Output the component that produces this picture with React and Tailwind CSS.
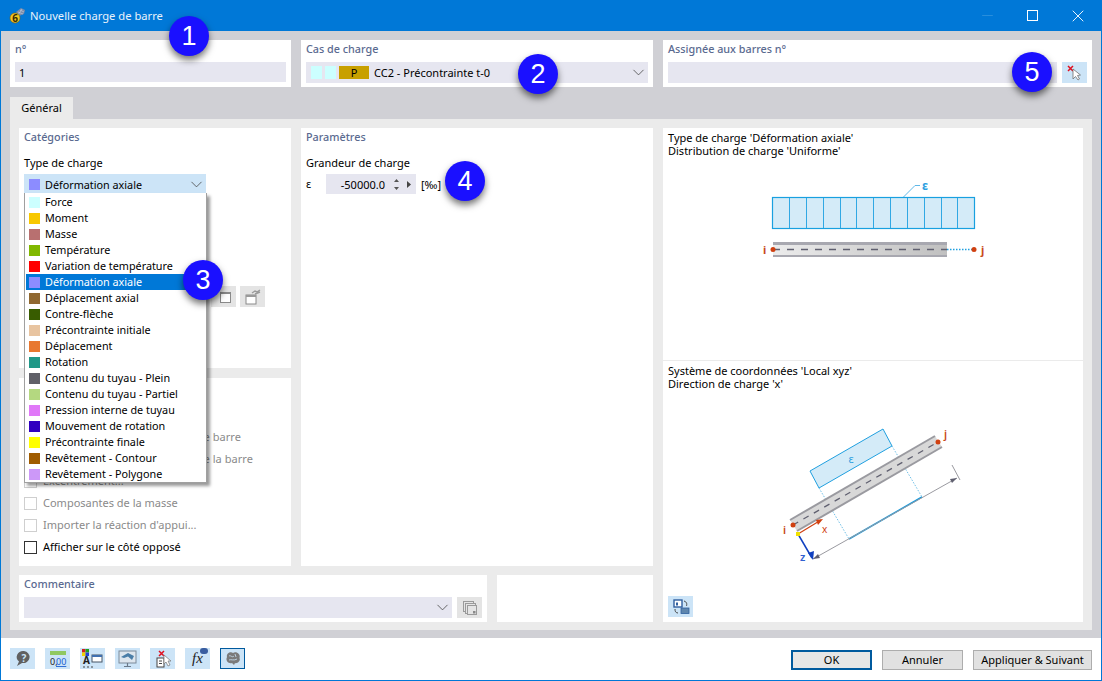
import { ChevronDown, Minus, X } from 'lucide-react';

const loadTypes = [
  ['Force', 'bg-[#ccffff]'],
  ['Moment', 'bg-[#f8c800]'],
  ['Masse', 'bg-[#b87070]'],
  ['Température', 'bg-[#80b800]'],
  ['Variation de température', 'bg-[#ff0000]'],
  ['Déformation axiale', 'bg-[#8c8cff]'],
  ['Déplacement axial', 'bg-[#906830]'],
  ['Contre-flèche', 'bg-[#385c00]'],
  ['Précontrainte initiale', 'bg-[#e8c4a0]'],
  ['Déplacement', 'bg-[#e87830]'],
  ['Rotation', 'bg-[#209888]'],
  ['Contenu du tuyau - Plein', 'bg-[#606068]'],
  ['Contenu du tuyau - Partiel', 'bg-[#b4d880]'],
  ['Pression interne de tuyau', 'bg-[#e078f8]'],
  ['Mouvement de rotation', 'bg-[#3000c0]'],
  ['Précontrainte finale', 'bg-[#ffff00]'],
  ['Revêtement - Contour', 'bg-[#a05c00]'],
  ['Revêtement - Polygone', 'bg-[#cc98f8]'],
];

const GroupTitle = ({ children }) => (
  <div className="h-[18px] text-[10.8px] leading-[16px] font-medium text-[#5a6a90]">{children}</div>
);

const Check = ({ label, enabled, wide }) => (
  <div className="flex h-[22px] items-center gap-[6px]">
    <span className={`h-[13px] w-[13px] border ${enabled ? 'border-[#333333]' : 'border-[#cfcfcf]'}`} />
    <span className={`${enabled ? 'text-black' : 'text-[#8a8a8a]'} ${wide ? 'tracking-[0.05px]' : ''}`}>{label}</span>
  </div>
);

const Badge = ({ n, className }) => (
  <div
    className={`absolute flex h-10 w-10 items-center justify-center rounded-full bg-[#1a10ff] text-[27px] text-white shadow-[0_4px_7px_rgba(0,0,0,0.55)] [font-family:'Liberation_Sans',sans-serif] ${className}`}
  >
    {n}
  </div>
);

const ToolButton = ({ children, active }) => (
  <div
    className={`flex h-[21px] w-[25px] items-center justify-center bg-[#cce4f7] ${active ? 'border border-[#005a9e]' : ''}`}
  >
    {children}
  </div>
);

const BeamDiagram = () => (
  <svg width="240" height="77" viewBox="0 0 240 77" className="block">
    <line x1="145" y1="38.5" x2="163" y2="20.5" stroke="#60b8e8" />
    <line x1="163" y1="20.5" x2="168" y2="20.5" stroke="#60b8e8" />
    <text x="170" y="25" fontSize="12" fontWeight="700" fill="#30a0e0" fontFamily="Noto Sans, sans-serif">ε</text>
    <rect x="20.5" y="32.5" width="202" height="31" fill="#d4ebf8" stroke="#18a0e0" strokeWidth="1.2" />
    {[37, 54, 71, 88, 104, 121, 138, 155, 172, 189, 205].map((x) => (
      <line key={x} x1={x + 0.5} y1="33" x2={x + 0.5} y2="63" stroke="#30a8e4" />
    ))}
  </svg>
);

const FlatBeam = () => (
  <svg width="240" height="22" viewBox="0 0 240 22" className="block">
    <defs>
      <linearGradient id="flatFill" x1="0" y1="0" x2="1" y2="0">
        <stop offset="0" stopColor="#ececec" />
        <stop offset="1" stopColor="#c0c0c0" />
      </linearGradient>
    </defs>
    <rect x="21" y="0" width="174" height="15" fill="url(#flatFill)" />
    <rect x="21" y="0" width="174" height="3" fill="#a8a8b0" />
    <rect x="21" y="13" width="174" height="2" fill="#a8a8b0" />
    <line x1="21" y1="7.5" x2="195" y2="7.5" stroke="#606070" strokeWidth="1.3" strokeDasharray="7 7" />
    <line x1="195" y1="7.5" x2="223" y2="7.5" stroke="#20a0e0" strokeWidth="1.5" strokeDasharray="1.5 1.5" />
    <circle cx="21" cy="7.5" r="2.5" fill="#d04010" />
    <circle cx="222" cy="7.5" r="2.5" fill="#d04010" />
    <text x="11" y="12" fontSize="11" fontWeight="700" fill="#c84a20" fontFamily="Noto Sans, sans-serif">i</text>
    <text x="229" y="12" fontSize="11" fontWeight="700" fill="#c84a20" fontFamily="Noto Sans, sans-serif">j</text>
  </svg>
);

const SkewDiagram = () => (
  <svg width="200" height="150" viewBox="780 420 200 150" className="block">
    <polygon points="810,471 883,429 892,446 819,488" fill="#d4ebf8" stroke="#20a0e0" />
    <text x="851" y="463" fontSize="11" fill="#30a0e0" fontFamily="Noto Sans, sans-serif" textAnchor="middle">ε</text>
    <line x1="819" y1="488" x2="849" y2="539" stroke="#70c0e8" strokeDasharray="1.5 1.5" />
    <line x1="892" y1="446" x2="922" y2="497" stroke="#70c0e8" strokeDasharray="1.5 1.5" />
    <polygon points="790,520 935,436 942,447 797,531" fill="#d8d8d8" />
    <line x1="790" y1="520" x2="935" y2="436" stroke="#9a9aa0" strokeWidth="2" />
    <line x1="797" y1="531" x2="942" y2="447" stroke="#9a9aa0" strokeWidth="2" />
    <line x1="793" y1="525" x2="938" y2="442" stroke="#606070" strokeWidth="1.3" strokeDasharray="6 6" />
    <line x1="849" y1="539" x2="922" y2="497" stroke="#109ae0" strokeWidth="1.6" />
    <line x1="813" y1="559" x2="957" y2="478" stroke="#9a9aa0" />
    <line x1="952" y1="465" x2="960" y2="480" stroke="#9a9aa0" />
    <polygon points="957,478 950,479 952,483" fill="#606070" />
    <polygon points="813,559 820,558 818,554" fill="#606070" />
    <circle cx="793" cy="525" r="2.5" fill="#d04010" />
    <circle cx="938" cy="442" r="2.5" fill="#d04010" />
    <line x1="798" y1="534" x2="821" y2="520" stroke="#d04010" strokeWidth="1.2" />
    <polygon points="823,519 816,520 818,525" fill="#d04010" />
    <line x1="798" y1="534" x2="812" y2="558" stroke="#1040c0" strokeWidth="1.5" />
    <polygon points="813,560 808,553 814,551" fill="#1040c0" />
    <rect x="796" y="532" width="4" height="4" fill="#f0e000" />
    <text x="783" y="534" fontSize="11" fontWeight="600" fill="#c84a20" fontFamily="Noto Sans, sans-serif">i</text>
    <text x="944" y="438" fontSize="11" fontWeight="600" fill="#c84a20" fontFamily="Noto Sans, sans-serif">j</text>
    <text x="822" y="533" fontSize="10" fill="#d04010" fontFamily="Noto Sans, sans-serif">x</text>
    <text x="800" y="561" fontSize="11" fontWeight="600" fill="#3060d0" fontFamily="Noto Sans, sans-serif">z</text>
  </svg>
);

const App = () => {
  return (
    <div className="relative flex h-[681px] w-[1102px] flex-col overflow-hidden border-x border-b border-[#0078d7] bg-white text-[11px] leading-4 text-black [font-family:'Noto_Sans',sans-serif]">
      <div className="flex h-[31px] shrink-0 items-center bg-[#0078d7] pl-[8px] text-[11.2px] text-[#e8f2fb]">
        <svg width="17" height="17" viewBox="0 0 17 17" className="mr-[4px]">
          <path d="M7 5 L12 1 L16 3 L15 7 L10 9 Z" fill="#7a8aa8" />
          <path d="M9 5 L14 7 M11 3 L15 5 M9 8 L13 2" stroke="#c4d0e0" strokeWidth="0.6" />
          <circle cx="6" cy="11" r="5" fill="#f4c820" stroke="#7a6010" strokeWidth="0.6" />
          <text x="6" y="14.5" fontSize="10" fontWeight="700" textAnchor="middle" fill="#3a2a00">6</text>
        </svg>
        <span>Nouvelle charge de barre</span>
        <div className="ml-auto flex items-center text-white">
          <Minus size={17} strokeWidth={0.9} className="mr-[31px] text-[#3f9ae0]" />
          <span className="mr-[30px] h-[11px] w-[11px] border border-white" />
          <X size={20} strokeWidth={1.1} className="mr-[13px]" />
        </div>
      </div>

      <div className="flex h-[607px] shrink-0 flex-col bg-[#d0d0d5] px-[9px] pt-[9px]">
        <div className="flex h-[47px] shrink-0 gap-[10px]">
          <div className="w-[281px] bg-white px-[5px] pt-[1px]">
            <GroupTitle>n°</GroupTitle>
            <div className="mt-[3px] flex h-5 items-center bg-[#e6e6f0] px-[4px] pt-[1px] text-black">1</div>
          </div>
          <div className="w-[352px] bg-white px-[5px] pt-[1px]">
            <GroupTitle>Cas de charge</GroupTitle>
            <div className="mt-[3px] flex h-[21px] items-center bg-[#e6e6f0] pl-[5px]">
              <span className="h-[13px] w-[11px] bg-[#ccffff]" />
              <span className="ml-[3px] h-[13px] w-[11px] bg-[#ccffff]" />
              <span className="ml-[3px] flex h-[13px] w-[30px] items-center justify-center bg-[#c8a000]">P</span>
              <span className="ml-[5px]">CC2 - Précontrainte t-0</span>
              <ChevronDown size={19} strokeWidth={1} className="ml-auto text-[#444444]" />
            </div>
          </div>
          <div className="w-[429px] bg-white px-[5px] pt-[1px]">
            <GroupTitle>Assignée aux barres n°</GroupTitle>
            <div className="mt-[3px] flex h-[21px] gap-[5px]">
              <div className="w-[389px] bg-[#e6e6f0]" />
              <div className="flex w-[25px] items-center justify-center bg-[#cce4f7]">
                <svg width="16" height="16" viewBox="0 0 16 16">
                  <path d="M1 1 L6 6 M6 1 L1 6" stroke="#e01020" strokeWidth="1.5" />
                  <path d="M6 4 L6 14 L8.5 11.5 L11 15 L12.5 14 L10.5 10.5 L13.5 10 Z" fill="#fff" stroke="#707070" strokeWidth="0.8" />
                </svg>
              </div>
            </div>
          </div>
        </div>

        <div className="mt-[10px] flex h-[22px] w-[63px] shrink-0 items-center justify-center bg-[#ebebeb]">Général</div>

        <div className="flex h-[511px] shrink-0 gap-[10px] bg-[#ebebeb] pl-[9px] pt-[9px]">
          <div className="flex w-[634px] shrink-0 flex-col gap-[9px]">
            <div className="flex h-[438px] gap-[10px]">
              <div className="flex w-[272px] flex-col gap-[10px]">
                <div className="relative h-[240px] bg-white px-[5px] pt-[1px]">
                  <GroupTitle>Catégories</GroupTitle>
                  <div className="mt-[8px] h-4">Type de charge</div>
                  <div className="mt-[3px] flex h-5 w-[182px] items-center bg-[#cce4f7] pl-[5px] text-[10.8px]">
                    <span className="h-[11px] w-[11px] bg-[#8c8cff]" />
                    <span className="ml-[5px] mt-[1px]">Déformation axiale</span>
                    <ChevronDown size={19} strokeWidth={1} className="ml-auto text-[#444444]" />
                  </div>
                  <div className="absolute left-[192px] top-[158px] flex gap-[4px]">
                    <div className="flex h-[21px] w-[25px] items-center justify-center bg-[#e4e4e4] pl-[3px] pt-[2px]">
                      <span className="h-[11px] w-[11px] border border-t-2 border-[#8a8a8a] bg-white" />
                    </div>
                    <div className="flex h-[21px] w-[25px] items-center justify-center bg-[#e4e4e4]">
                      <svg width="18" height="16" viewBox="0 0 18 16">
                        <rect x="2" y="6" width="10" height="9" fill="#fff" stroke="#8a8a8a" />
                        <rect x="2" y="6" width="10" height="2" fill="#9a9a9a" />
                        <path d="M8 4 L11 2 L13 3 L16 1 M11 5 L16 3" stroke="#9a9a9a" strokeWidth="1.4" fill="none" />
                      </svg>
                    </div>
                  </div>
                </div>
                <div className="flex h-[188px] flex-col justify-end bg-white px-[5px] pb-[8px]">
                  <Check label="Charge sur toute la longueur de barre" wide />
                  <Check label="Charge sur toute la longueur de la barre" wide />
                  <Check label="Excentrement..." />
                  <Check label="Composantes de la masse" />
                  <Check label="Importer la réaction d'appui..." />
                  <Check label="Afficher sur le côté opposé" enabled />
                </div>
              </div>
              <div className="w-[352px] bg-white px-[5px] pt-[1px]">
                <GroupTitle>Paramètres</GroupTitle>
                <div className="mt-[8px] h-4">Grandeur de charge</div>
                <div className="mt-[3px] flex h-5 items-center">
                  <span className="w-[20px]">ε</span>
                  <div className="flex h-5 w-[90px] items-center bg-[#e6e6f0]">
                    <span className="mt-[1px] w-[59px] text-right">-50000.0</span>
                    <svg width="31" height="20" viewBox="0 0 31 20">
                      <path d="M9 8 L11.5 5 L14 8 Z M9 13 L11.5 16 L14 13 Z" fill="#555555" />
                      <path d="M22 7 L26 10.5 L22 14 Z" fill="#444444" />
                    </svg>
                  </div>
                  <span className="ml-[5px] mt-[1px]">[‰]</span>
                </div>
              </div>
            </div>
            <div className="flex h-[47px] gap-[10px]">
              <div className="w-[468px] bg-white px-[5px] pt-[1px]">
                <GroupTitle>Commentaire</GroupTitle>
                <div className="mt-[3px] flex h-[21px] gap-[5px]">
                  <div className="flex w-[428px] items-center justify-end bg-[#e6e6f0]">
                    <ChevronDown size={19} strokeWidth={1} className="text-[#444444]" />
                  </div>
                  <div className="flex w-[25px] items-center justify-center bg-[#e4e4e4]">
                    <svg width="16" height="16" viewBox="0 0 16 16" fill="none" stroke="#9a9a9a">
                      <rect x="1.5" y="1.5" width="10" height="10" />
                      <rect x="3.5" y="3.5" width="10" height="10" fill="#e4e4e4" />
                      <rect x="5.5" y="5.5" width="9" height="9" fill="#e4e4e4" />
                      <rect x="11" y="11" width="2.5" height="2.5" fill="#8a8a8a" stroke="none" />
                    </svg>
                  </div>
                </div>
              </div>
              <div className="w-[156px] bg-white" />
            </div>
          </div>

          <div className="flex h-[494px] w-[420px] shrink-0 flex-col bg-white">
            <div className="h-[233px] border-b border-[#ebebeb] px-[5px] pt-[3px]">
              <div className="leading-[13px]">Type de charge 'Déformation axiale'</div>
              <div className="leading-[13px]">Distribution de charge 'Uniforme'</div>
              <div className="ml-[84px] mt-[8px]">
                <BeamDiagram />
                <FlatBeam />
              </div>
            </div>
            <div className="relative flex-1 px-[5px] pt-[3px]">
              <div className="leading-[13px]">Système de coordonnées 'Local xyz'</div>
              <div className="leading-[13px]">Direction de charge 'x'</div>
              <div className="ml-[112px] mt-[30px]">
                <SkewDiagram />
              </div>
              <div className="absolute bottom-[5px] left-[5px] flex h-[21px] w-[25px] items-center justify-center bg-[#cce4f7]">
                <svg width="18" height="16" viewBox="0 0 18 16">
                  <rect x="2" y="1" width="8" height="7" fill="#fff" stroke="#2f5f9f" strokeWidth="1.4" />
                  <rect x="4" y="3.5" width="2" height="3" fill="#2f5f9f" />
                  <rect x="9" y="9" width="8" height="5.5" fill="#5f86ad" stroke="#2f5f9f" strokeWidth="0.8" />
                  <path d="M12 2 C15 3 15 5 14.5 7 M6 14 C3.5 14 3 12 3 10" stroke="#444444" strokeWidth="1" fill="none" />
                </svg>
              </div>
            </div>
          </div>
        </div>
      </div>

      <div className="flex flex-1 items-start pl-[9px] pr-[9px] pt-[10px]">
        <div className="flex gap-[10px]">
          <ToolButton>
            <svg width="18" height="17" viewBox="0 0 18 17">
              <path d="M10 1 a6.5 6 0 1 1 -2 12 L3 16 L5 11.5 A6.5 6 0 0 1 10 1 Z" fill="#606060" />
              <text x="10" y="11.5" fontSize="10" fontWeight="700" textAnchor="middle" fill="#cce4f7">?</text>
            </svg>
          </ToolButton>
          <ToolButton>
            <svg width="18" height="18" viewBox="0 0 18 18">
              <rect x="1" y="1" width="16" height="4" fill="#90c860" />
              <text x="1" y="15" fontSize="9" fill="#222222">0,</text>
              <text x="7" y="15" fontSize="9" fill="#2060d0" textDecoration="underline">00</text>
            </svg>
          </ToolButton>
          <ToolButton>
            <svg width="21" height="19" viewBox="0 0 21 19">
              <rect x="0" y="0" width="3.5" height="3.5" fill="#d02020" />
              <rect x="3.5" y="0" width="3.5" height="3.5" fill="#20a020" />
              <rect x="0" y="3.5" width="3.5" height="3.5" fill="#f0d000" />
              <rect x="3.5" y="3.5" width="3.5" height="3.5" fill="#2040d0" />
              <text x="1" y="15" fontSize="10" fontWeight="700" fill="#222222">A</text>
              <rect x="10" y="6" width="10" height="7" fill="#fff" stroke="#445566" />
              <rect x="10" y="6" width="10" height="2" fill="#4070b0" />
              <path d="M1 18 h2 M5 18 h2 M9 18 h2" stroke="#444444" />
            </svg>
          </ToolButton>
          <ToolButton>
            <svg width="20" height="18" viewBox="0 0 20 18">
              <rect x="1" y="1" width="17" height="12" fill="#dde6ee" stroke="#7a8a9a" />
              <path d="M3 7 L10 3 L16 6 L14 10 L10 6.5 L6 8 Z" fill="#4a7ea8" />
              <path d="M9.5 13 V16 M6 16.5 H13" stroke="#6a7a8a" strokeWidth="1.2" />
            </svg>
          </ToolButton>
          <ToolButton>
            <svg width="20" height="18" viewBox="0 0 20 18">
              <path d="M6 1 L11 6 M11 1 L6 6" stroke="#e01020" strokeWidth="1.5" />
              <rect x="4" y="8" width="7" height="9" fill="#fff" stroke="#444444" />
              <path d="M6 11 h3 M6 13.5 h3" stroke="#444444" />
              <path d="M11 5 L11 14 L13 12 L15 16 L17 15 L15 11 L18 11 Z" fill="#fff" stroke="#808080" strokeWidth="0.8" />
            </svg>
          </ToolButton>
          <ToolButton>
            <span className="relative text-[15px] italic leading-none text-[#222222] [font-family:'Liberation_Serif',serif]">
              fx
              <span className="absolute -right-[5px] -top-[3px] h-[6px] w-[8px] rounded-full bg-[#3a5ea0]" />
            </span>
          </ToolButton>
          <ToolButton active>
            <svg width="18" height="15" viewBox="0 0 18 15">
              <path d="M3 6 C2 2 7 0 9 2 C12 0 17 3 15.5 7 C17 10 13 13 11 12 L10 14 L8 12 C5 13 1 10 3 6 Z" fill="#7a7a7a" />
              <path d="M5 5 C7 4 8 7 10 5 M5 9 C7 8 10 10 13 8 M11 3 L12 6" stroke="#cce4f7" strokeWidth="0.8" fill="none" />
            </svg>
          </ToolButton>
        </div>
        <div className="ml-auto mt-[2px] flex gap-[10px]">
          <div className="flex h-5 w-[81px] items-center justify-center border-2 border-[#005a9e] bg-[#e6e6e6]">OK</div>
          <div className="flex h-5 w-[81px] items-center justify-center border border-[#adadad] bg-[#e1e1e1]">Annuler</div>
          <div className="flex h-5 w-[119px] items-center justify-center border border-[#adadad] bg-[#e1e1e1]">Appliquer &amp; Suivant</div>
        </div>
      </div>

      <div className="absolute left-[23px] top-[193px] w-[183px] border-x border-b border-[#a0a0a0] bg-white px-[1px] pt-[1px] text-[10.8px] shadow-[3px_3px_3px_rgba(0,0,0,0.4)]">
        {loadTypes.map(([label, color]) => (
          <div
            key={label}
            className={`flex h-4 items-center pl-[3px] ${label === 'Déformation axiale' ? 'bg-[#0078d7] text-white' : ''}`}
          >
            <span className={`h-[11px] w-[11px] shrink-0 ${color}`} />
            <span className="ml-[5px]">{label}</span>
          </div>
        ))}
      </div>

      <Badge n="1" className="left-[168px] top-[16px]" />
      <Badge n="2" className="left-[517px] top-[54px]" />
      <Badge n="3" className="left-[182px] top-[260px]" />
      <Badge n="4" className="left-[444px] top-[161px]" />
      <Badge n="5" className="left-[1011px] top-[52px]" />
    </div>
  );
};

export default App;
